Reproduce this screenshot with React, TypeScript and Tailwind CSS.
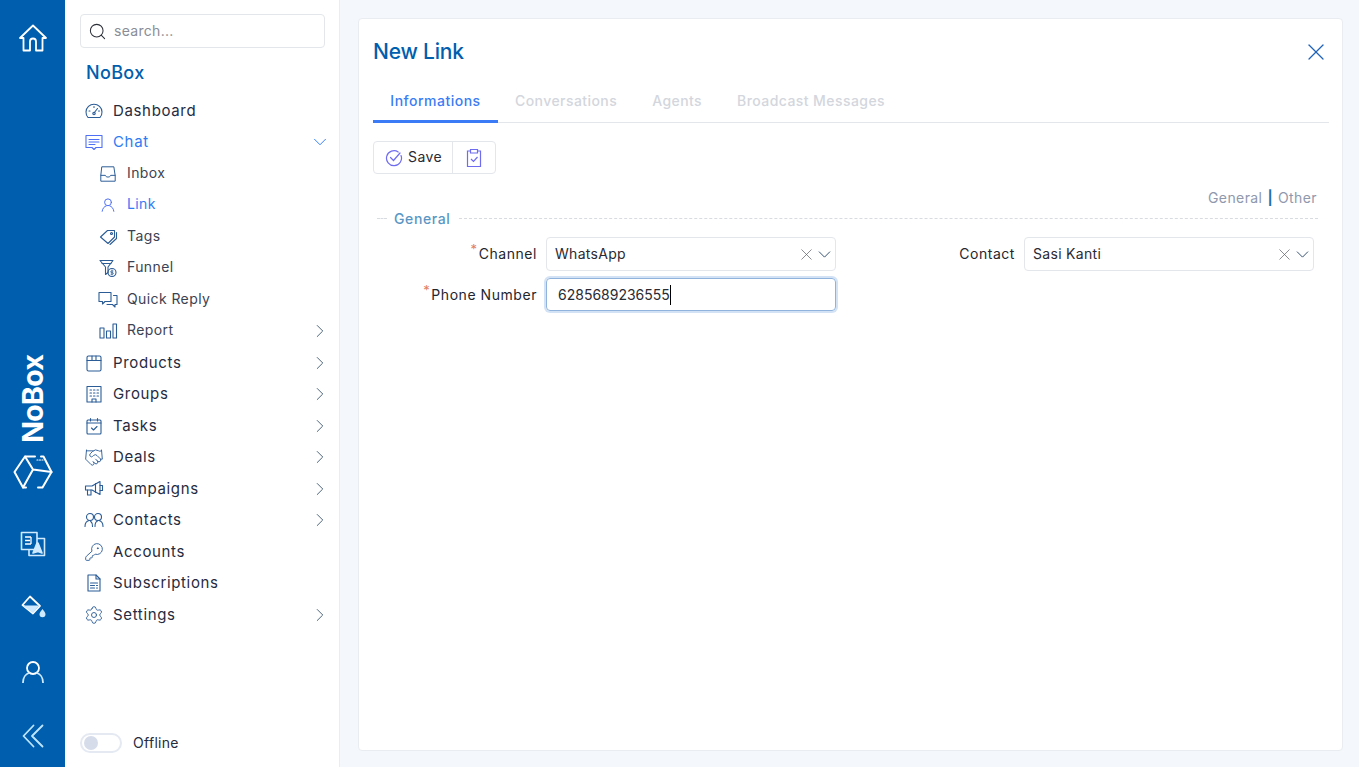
import React from "react";
import { Search, ChevronRight, ChevronDown, X, Handshake, KeyRound, Settings } from "lucide-react";

const S = ({ children, size = 20, className = "" }: { children: React.ReactNode; size?: number; className?: string }) => (
  <svg width={size} height={size} viewBox="0 0 20 20" fill="none" stroke="currentColor" strokeWidth={1.1} strokeLinecap="round" strokeLinejoin="round" className={className}>
    {children}
  </svg>
);

const GaugeI = () => (
  <S><path d="M4 16.5a8 8 0 1 1 12 0z" /><path d="M10 12l3.5-4.5" /><circle cx="10" cy="12.5" r="1.2" /><path d="M5 10h1M10 5.5v1M14.5 10h1" /></S>
);
const ChatI = () => (
  <S size={21}><path d="M2 3h16v12h-6l-2 2-2-2H2z" /><path d="M5 7h10M5 9.500h10M5 12h6" /></S>
);
const InboxI = () => (
  <S size={18}><path d="M3.500 2h13l1.500 10v6H2v-6z" /><path d="M2 11.500h5c.5 2.500 5.500 2.500 6 0h5" /></S>
);
const LinkI = () => (
  <S size={18}><circle cx="10" cy="7" r="3.800" /><path d="M3.500 17c.5-3.500 2.500-5.500 4.500-6M16.500 17c-.5-3.500-2.500-5.500-4.500-6" /></S>
);
const TagI = () => (
  <S size={21}><path d="M2.500 10.500L9.500 4h7v6.500L10 17z" /><circle cx="13.500" cy="7" r="1" /><path d="M18.500 6v6l-6.500 6" /></S>
);
const FunnelI = () => (
  <S size={21}><path d="M2 2h13l-5 6.500V14l-2.500 2V8.500z" /><path d="M4 5h9" /><circle cx="14" cy="14" r="4" /><path d="M15 12.500h-1.500a.8.800 0 0 0 0 1.600h1a.8.800 0 0 1 0 1.600H13M14 11.500v5" strokeWidth={0.8} /></S>
);
const ReplyI = () => (
  <S size={21}><path d="M1 3h12v9H7l-2.500 2.500V12H1z" /><path d="M15.500 6H19v9h-2v2.500L14.500 15H9" /></S>
);
const ReportI = () => (
  <S><rect x="2" y="7" width="4" height="10" /><rect x="8.500" y="10" width="4" height="7" /><rect x="15" y="3" width="3.500" height="14" /></S>
);
const BoxI = () => (
  <S><rect x="3" y="3" width="14" height="15" rx="1.500" /><path d="M3 7.500h14M8 3v4.500M12 3v4.500" /></S>
);
const BuildI = () => (
  <S><rect x="3" y="2.500" width="14" height="15.500" /><path d="M6 6h1.500M9.500 6H11M13 6h1.500M6 9h1.500M9.500 9H11M13 9h1.500M6 12h1.500M9.500 12H11M13 12h1.500M8 18v-3h4v3" /></S>
);
const TaskI = () => (
  <S><rect x="3" y="4" width="14" height="14" rx="1" /><path d="M3 7h14M6.500 2.500V5M13.500 2.500V5M7.500 12l2 2 3.500-3.500" /></S>
);
const DocI = () => (
  <S><path d="M4 2h8l4 4v12H4z" /><path d="M12 2v4h4M6.500 10h7M6.500 12.500h4M12.500 12.500h1M6.500 15h4M12.500 15h1" /></S>
);
const MegaI = () => (
  <S size={21}><path d="M1.500 7.500h6.500L16 3v13l-8-4.500H1.500z" /><path d="M3.500 11.500v5h3.500v-5M16 7h2.500v5H16M11.500 5v9" /></S>
);
const UsersI = () => (
  <S size={21}><circle cx="6" cy="6.500" r="3.500" /><circle cx="14" cy="6.500" r="3.500" /><path d="M1 16c0-3.500 2-5.500 4-6M8.500 16c0-2.500-.8-4.500-2-5.500M11 16c0-3.500 1.200-5 2.500-5.500M19 16c0-3.500-2-5.500-4-6" /></S>
);

const HomeI = () => (
  <svg width="28" height="28" viewBox="0 0 28 28" fill="none" stroke="#fff" strokeWidth={1.800} strokeLinejoin="round" strokeLinecap="round">
    <path d="M1 14L14 1.500 27 14h-3.500v12.500h-6.500V17.500a3 3 0 0 0-6 0v9H4.500V14z" />
  </svg>
);
const Logo = () => (
  <svg width="40" height="36" viewBox="0 0 40 36" fill="none" stroke="#fff" strokeWidth={2} strokeLinejoin="round" strokeLinecap="round">
    <path d="M22 2.500H12L1.500 18 10 33.500h3M25 33.500h4.500l9-15.500-8-15.500H28" />
    <path d="M12 2.500l8 13 18.500 2.500M20 15.500L10 33.500" />
    <path d="M24 6h6" strokeDasharray="1 1.500" strokeWidth={1.200} />
  </svg>
);
const Translate = () => (
  <svg width="26" height="26" viewBox="0 0 26 26" fill="none" stroke="#cfeaff" strokeWidth={1.600} strokeLinejoin="round">
    <path d="M1.500 1.500h15.500v17H1.500z" />
    <path d="M9 19v5.500h15.500V7.500H17" />
    <path d="M5 6h6M5 9.500h5M5 13h6M11 6v7" strokeWidth={1.300} stroke="#fff" />
    <path d="M13 22l4-10h1l4 10-4-1.500z" fill="#cfeaff" />
  </svg>
);
const Bucket = () => (
  <svg width="26" height="24" viewBox="0 0 26 24" fill="none" stroke="#fff" strokeWidth={1.800} strokeLinejoin="round">
    <path d="M9 1.500L19 11l-7 7.500L1.500 10z" />
    <path d="M1.500 10.500h17L12 18z" fill="#cfeaff" stroke="none" />
    <path d="M21.500 14c1.500 2 3 3.500 3 5.200a3 3 0 0 1-6 0c0-1.700 1.500-3.200 3-5.200z" fill="#cfeaff" stroke="none" />
  </svg>
);
const UserI = () => (
  <svg width="22" height="22" viewBox="0 0 22 22" fill="none" strokeWidth={1.800} strokeLinecap="round">
    <circle cx="11" cy="7" r="6" stroke="#fff" />
    <path d="M1 21.500c0-5 3-8.500 6-9.500M21 21.500c0-5-3-8.500-6-9.500" stroke="#cfeaff" />
  </svg>
);
const Chevrons = () => (
  <svg width="22" height="24" viewBox="0 0 22 24" fill="none" stroke="#bfe6ff" strokeWidth={1.800} strokeLinecap="round" strokeLinejoin="round">
    <path d="M11.500 1.500L1.500 12l10 10.500M20.500 1.500L10 12l10.500 10.500" />
  </svg>
);

const Top = ({ icon, label, chev, active }: { icon: React.ReactNode; label: string; chev?: "r" | "d"; active?: boolean }) => (
  <div className="flex h-[31.5px] items-center pl-[19px] pr-[8px]">
    <span className={`flex w-[20px] justify-center ${active ? "text-[#4f6ff5]" : "text-[#2b5c96]"}`}>{icon}</span>
    <span className={`ml-[9px] flex-1 text-[15px] font-[420] tracking-[0.65px] ${active ? "text-[#2f7bf6]" : "text-[#262b40]"}`}>{label}</span>
    {chev === "r" && <ChevronRight size={22} strokeWidth={1.050} className="text-[#47617c]" />}
    {chev === "d" && <ChevronDown size={22} strokeWidth={1.050} className="text-[#2f7bf6]" />}
  </div>
);
const Sub = ({ icon, label, chev, active }: { icon: React.ReactNode; label: string; chev?: boolean; active?: boolean }) => (
  <div className="flex h-[31.5px] items-center pl-[33px] pr-[8px]">
    <span className={`flex w-[20px] justify-center ${active ? "text-[#4f6ff5]" : "text-[#2b5c96]"}`}>{icon}</span>
    <span className={`ml-[9px] flex-1 pb-[3px] text-[14px] tracking-[0.4px] ${active ? "text-[#2f7bf6]" : "text-[#3c4252]"}`}>{label}</span>
    {chev && <ChevronRight size={22} strokeWidth={1.050} className="text-[#47617c]" />}
  </div>
);

const SelectBox = ({ value }: { value: string }) => (
  <div className="flex h-[34px] w-[290px] items-center rounded-[4px] border border-[#e3e6ea] pl-[8px]">
    <span className="flex-1 pb-[1px] text-[14px] tracking-[0.3px] text-[#2a2a33]">{value}</span>
    <X size={19} strokeWidth={0.900} className="text-[#5a5f69]" />
    <ChevronDown size={21} strokeWidth={1.100} className="-ml-[2px] text-[#2e4c6e]" />
  </div>
);

const Label = ({ text, req }: { text: string; req?: boolean }) => (
  <span className="flex items-start pb-[1px] text-[14px] tracking-[0.55px] text-[#24262e]">
    {req && <span className="mr-[1px] -mt-[3px] text-[13px] text-[#e2805a]">*</span>}
    {text}
  </span>
);

export default function App() {
  return (
    <div className="flex h-[767px] w-[1359px] overflow-hidden bg-[#f4f7fb] font-['Inter',sans-serif]">
      <aside className="flex w-[65px] shrink-0 flex-col items-center bg-[#005eae] pt-[24px] pb-[19px]">
        <HomeI />
        <div className="mt-auto flex flex-col items-center">
          <span className="rotate-180 text-[29px] leading-[30px] font-bold tracking-[-1px] text-white [writing-mode:vertical-rl]">NoBox</span>
          <div className="mt-[11px]"><Logo /></div>
          <div className="mt-[41px]"><Translate /></div>
          <div className="mt-[38px] ml-[2px]"><Bucket /></div>
          <div className="mt-[42px]"><UserI /></div>
          <div className="mt-[41px]"><Chevrons /></div>
        </div>
      </aside>

      <nav className="flex w-[275px] shrink-0 flex-col border-r border-[#e9ecf0] bg-white pt-[14px]">
        <div className="mx-[15px] flex h-[34px] w-[245px] items-center rounded-[4px] border border-[#e3e6ea] pl-[7px]">
          <Search size={19} strokeWidth={1.300} className="text-[#2b2f38]" />
          <span className="ml-[7px] pb-[2px] text-[14px] tracking-[0.3px] text-[#8a8d95]">search...</span>
        </div>
        <div className="ml-[21px] mt-[11px] text-[18px] leading-[27px] font-medium tracking-[0.35px] text-[#005eae]">NoBox</div>
        <div className="mt-[9px] flex flex-col">
          <Top icon={<GaugeI />} label="Dashboard" />
          <Top icon={<ChatI />} label="Chat" chev="d" active />
          <Sub icon={<InboxI />} label="Inbox" />
          <Sub icon={<LinkI />} label="Link" active />
          <Sub icon={<TagI />} label="Tags" />
          <Sub icon={<FunnelI />} label="Funnel" />
          <Sub icon={<ReplyI />} label="Quick Reply" />
          <Sub icon={<ReportI />} label="Report" chev />
          <Top icon={<BoxI />} label="Products" chev="r" />
          <Top icon={<BuildI />} label="Groups" chev="r" />
          <Top icon={<TaskI />} label="Tasks" chev="r" />
          <Top icon={<Handshake size={21} strokeWidth={1.100} />} label="Deals" chev="r" />
          <Top icon={<MegaI />} label="Campaigns" chev="r" />
          <Top icon={<UsersI />} label="Contacts" chev="r" />
          <Top icon={<KeyRound size={20} strokeWidth={1.100} />} label="Accounts" />
          <Top icon={<DocI />} label="Subscriptions" />
          <Top icon={<Settings size={20} strokeWidth={1.100} />} label="Settings" chev="r" />
        </div>
        <div className="mt-auto mb-[14px] ml-[15px] flex items-center">
          <div className="flex h-[20px] w-[42px] items-center rounded-full border-2 border-[#e4e9f2] bg-white pl-[2px]">
            <div className="h-[14px] w-[14px] rounded-full bg-[#d6dcea]" />
          </div>
          <span className="ml-[11px] text-[14px] tracking-[0.3px] text-[#262b40]">Offline</span>
        </div>
      </nav>

      <main className="flex flex-1 flex-col pt-[18px] pr-[16px] pb-[16px] pl-[18px]">
        <div className="flex flex-1 flex-col rounded-[4px] border border-[#e9ecf0] bg-white pl-[14px] pr-[13px]">
          <div className="flex h-[66px] items-center justify-between">
            <h1 className="text-[21px] font-medium tracking-[-0.2px] text-[#005eae]">New Link</h1>
            <X size={28} strokeWidth={1.100} className="-mr-[1px] text-[#1f63b8]" />
          </div>
          <div className="flex h-[38px] border-b border-[#e3e6ea]">
            <div className="-mb-[1px] flex w-[125px] justify-center border-b-[3px] border-[#3b7bf6] pt-[5px] text-[14px] font-medium tracking-[0.5px] text-[#3b7bf6]">Informations</div>
            {["Conversations", "Agents", "Broadcast Messages"].map((t, i) => (
              <div key={t} className={`${i === 0 ? "ml-[17px]" : "ml-[35px]"} pt-[5px] text-[14px] font-medium tracking-[0.43px] text-[#d3d6dd]`}>{t}</div>
            ))}
          </div>
          <div className="mt-[18px] flex h-[33px] w-[123px] items-center rounded-[4px] border border-[#e3e6ea]">
            <div className="flex h-full w-[79px] items-center border-r border-[#e3e6ea] pl-[11px]">
              <svg width="18" height="18" viewBox="0 0 18 18" fill="none" stroke="#6f6cf0" strokeWidth={1.200} strokeLinecap="round"><path d="M16 6.500A7.500 7.500 0 1 1 13.200 3" /><path d="M5.500 8.500l3 3 6.500-7.500" /></svg>
              <span className="ml-[5px] pb-[2px] text-[14px] tracking-[0.4px] text-[#2a2a33]">Save</span>
            </div>
            <div className="flex flex-1 justify-center">
              <svg width="18" height="20" viewBox="0 0 18 20" fill="none" stroke="#6f6cf0" strokeWidth={1.200}><path d="M5 3H2.500v15.500h13V3H13" /><path d="M5.500 1.500h7V5h-7z" /><path d="M6 11l2.500 2.500L12.500 9" /></svg>
            </div>
          </div>
          <div className="mr-[12px] mt-[13px] flex justify-end text-[14px] tracking-[0.4px] text-[#8f98ac]">
            <span>General</span>
            <span className="mx-[5px] font-bold text-[#1f6fb5]">|</span>
            <span>Other</span>
          </div>
          <div className="ml-[4px] mr-[11px] flex items-center">
            <div className="w-[10px] border-t border-dashed border-[#d8dbe0]" />
            <span className="mx-[7px] text-[14px] font-medium tracking-[0.6px] text-[#5a96c4]">General</span>
            <div className="ml-[2px] flex-1 border-t border-dashed border-[#d8dbe0]" />
          </div>
          <div className="mt-[8px] grid grid-cols-[164px_290px_170px_290px] gap-x-[9px] gap-y-[7px]">
            <div className="flex items-center justify-end"><Label text="Channel" req /></div>
            <SelectBox value="WhatsApp" />
            <div className="flex items-center justify-end"><Label text="Contact" /></div>
            <SelectBox value="Sasi Kanti" />
            <div className="flex items-center justify-end"><Label text="Phone Number" req /></div>
            <div className="flex h-[33px] items-center rounded-[4px] border border-[#8fb3dc] pl-[11px] shadow-[0_0_0_2px_#d3e2f5]">
              <span className="border-r border-black text-[14px] leading-[20px] text-[#2a2a33]">6285689236555</span>
            </div>
          </div>
        </div>
      </main>
    </div>
  );
}
